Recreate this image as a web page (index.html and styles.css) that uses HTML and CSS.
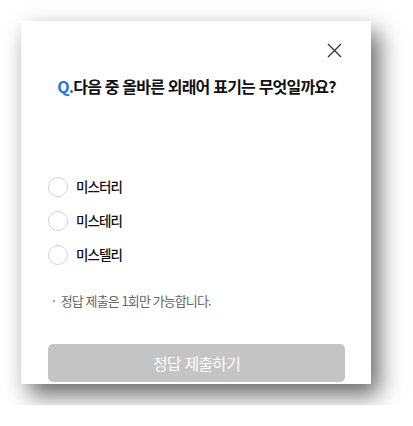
FILE: index.html
```html
<!DOCTYPE html>
<html lang="ko">
<head>
  <meta charset="UTF-8">
  <meta name="viewport" content="width=device-width, initial-scale=1.0">
  <title>퀴즈</title>
  <link rel="stylesheet" href="styles.css">
</head>
<body>
  <div class="quiz">
    <div class="quiz-top">
      <button class="close" aria-label="닫기">
        <svg width="15" height="15" viewBox="0 0 15 15">
          <path d="M1 1 L14 14 M14 1 L1 14" stroke="#333" stroke-width="1.3" fill="none"/>
        </svg>
      </button>
    </div>
    <h2 class="question"><span class="q">Q.</span>다음 중 올바른 외래어 표기는 무엇일까요?</h2>

    <ul class="options">
      <li><span class="radio"></span>미스터리</li>
      <li><span class="radio"></span>미스테리</li>
      <li><span class="radio"></span>미스텔리</li>
    </ul>

    <p class="note"><span class="dot">·</span>정답 제출은 1회만 가능합니다.</p>

    <button class="submit" disabled>정답 제출하기</button>
  </div>
</body>
</html>
```

FILE: styles.css
```css
body {
  margin: 0;
  padding: 21px;
  background: #fff;
  font-family: "Noto Sans CJK KR", "Noto Sans", sans-serif;
}

.quiz {
  width: 350px;
  height: 363px;
  box-sizing: border-box;
  padding: 0 26px 0 27px;
  background: #fff;
  overflow: hidden;
  box-shadow: 8px 11px 22px rgba(0, 0, 0, 0.6);
  display: flex;
  flex-direction: column;
}

.quiz-top {
  display: flex;
  justify-content: flex-end;
  padding-top: 22px;
  padding-right: 3px;
}

.close {
  background: none;
  border: none;
  padding: 0;
  width: 15px;
  height: 15px;
  cursor: pointer;
}

.close svg {
  display: block;
}

.question {
  margin: 16px 0 0;
  font-size: 16px;
  line-height: 24px;
  font-weight: 700;
  letter-spacing: -0.8px;
  color: #111;
  text-align: center;
}

.q {
  color: #1a73e8;
}

.options {
  list-style: none;
  margin: 78px 0 0;
  padding: 0;
  display: flex;
  flex-direction: column;
  gap: 13px;
}

.options li {
  display: flex;
  align-items: center;
  gap: 8px;
  font-size: 13.5px;
  line-height: 21px;
  font-weight: 500;
  letter-spacing: -0.9px;
  color: #111;
}

.radio {
  width: 18px;
  height: 18px;
  border: 1px solid #d4d4d4;
  border-radius: 50%;
}

.note {
  margin: 26px 0 0 4px;
  font-size: 13px;
  line-height: 20px;
  letter-spacing: -0.9px;
  color: #666;
}

.dot {
  margin-right: 6px;
}

.submit {
  margin-top: 33px;
  height: 38px;
  flex-shrink: 0;
  border: none;
  border-radius: 5px;
  background: #c4c4c4;
  color: #fff;
  font-family: inherit;
  font-size: 16px;
  letter-spacing: -0.8px;
}
```
